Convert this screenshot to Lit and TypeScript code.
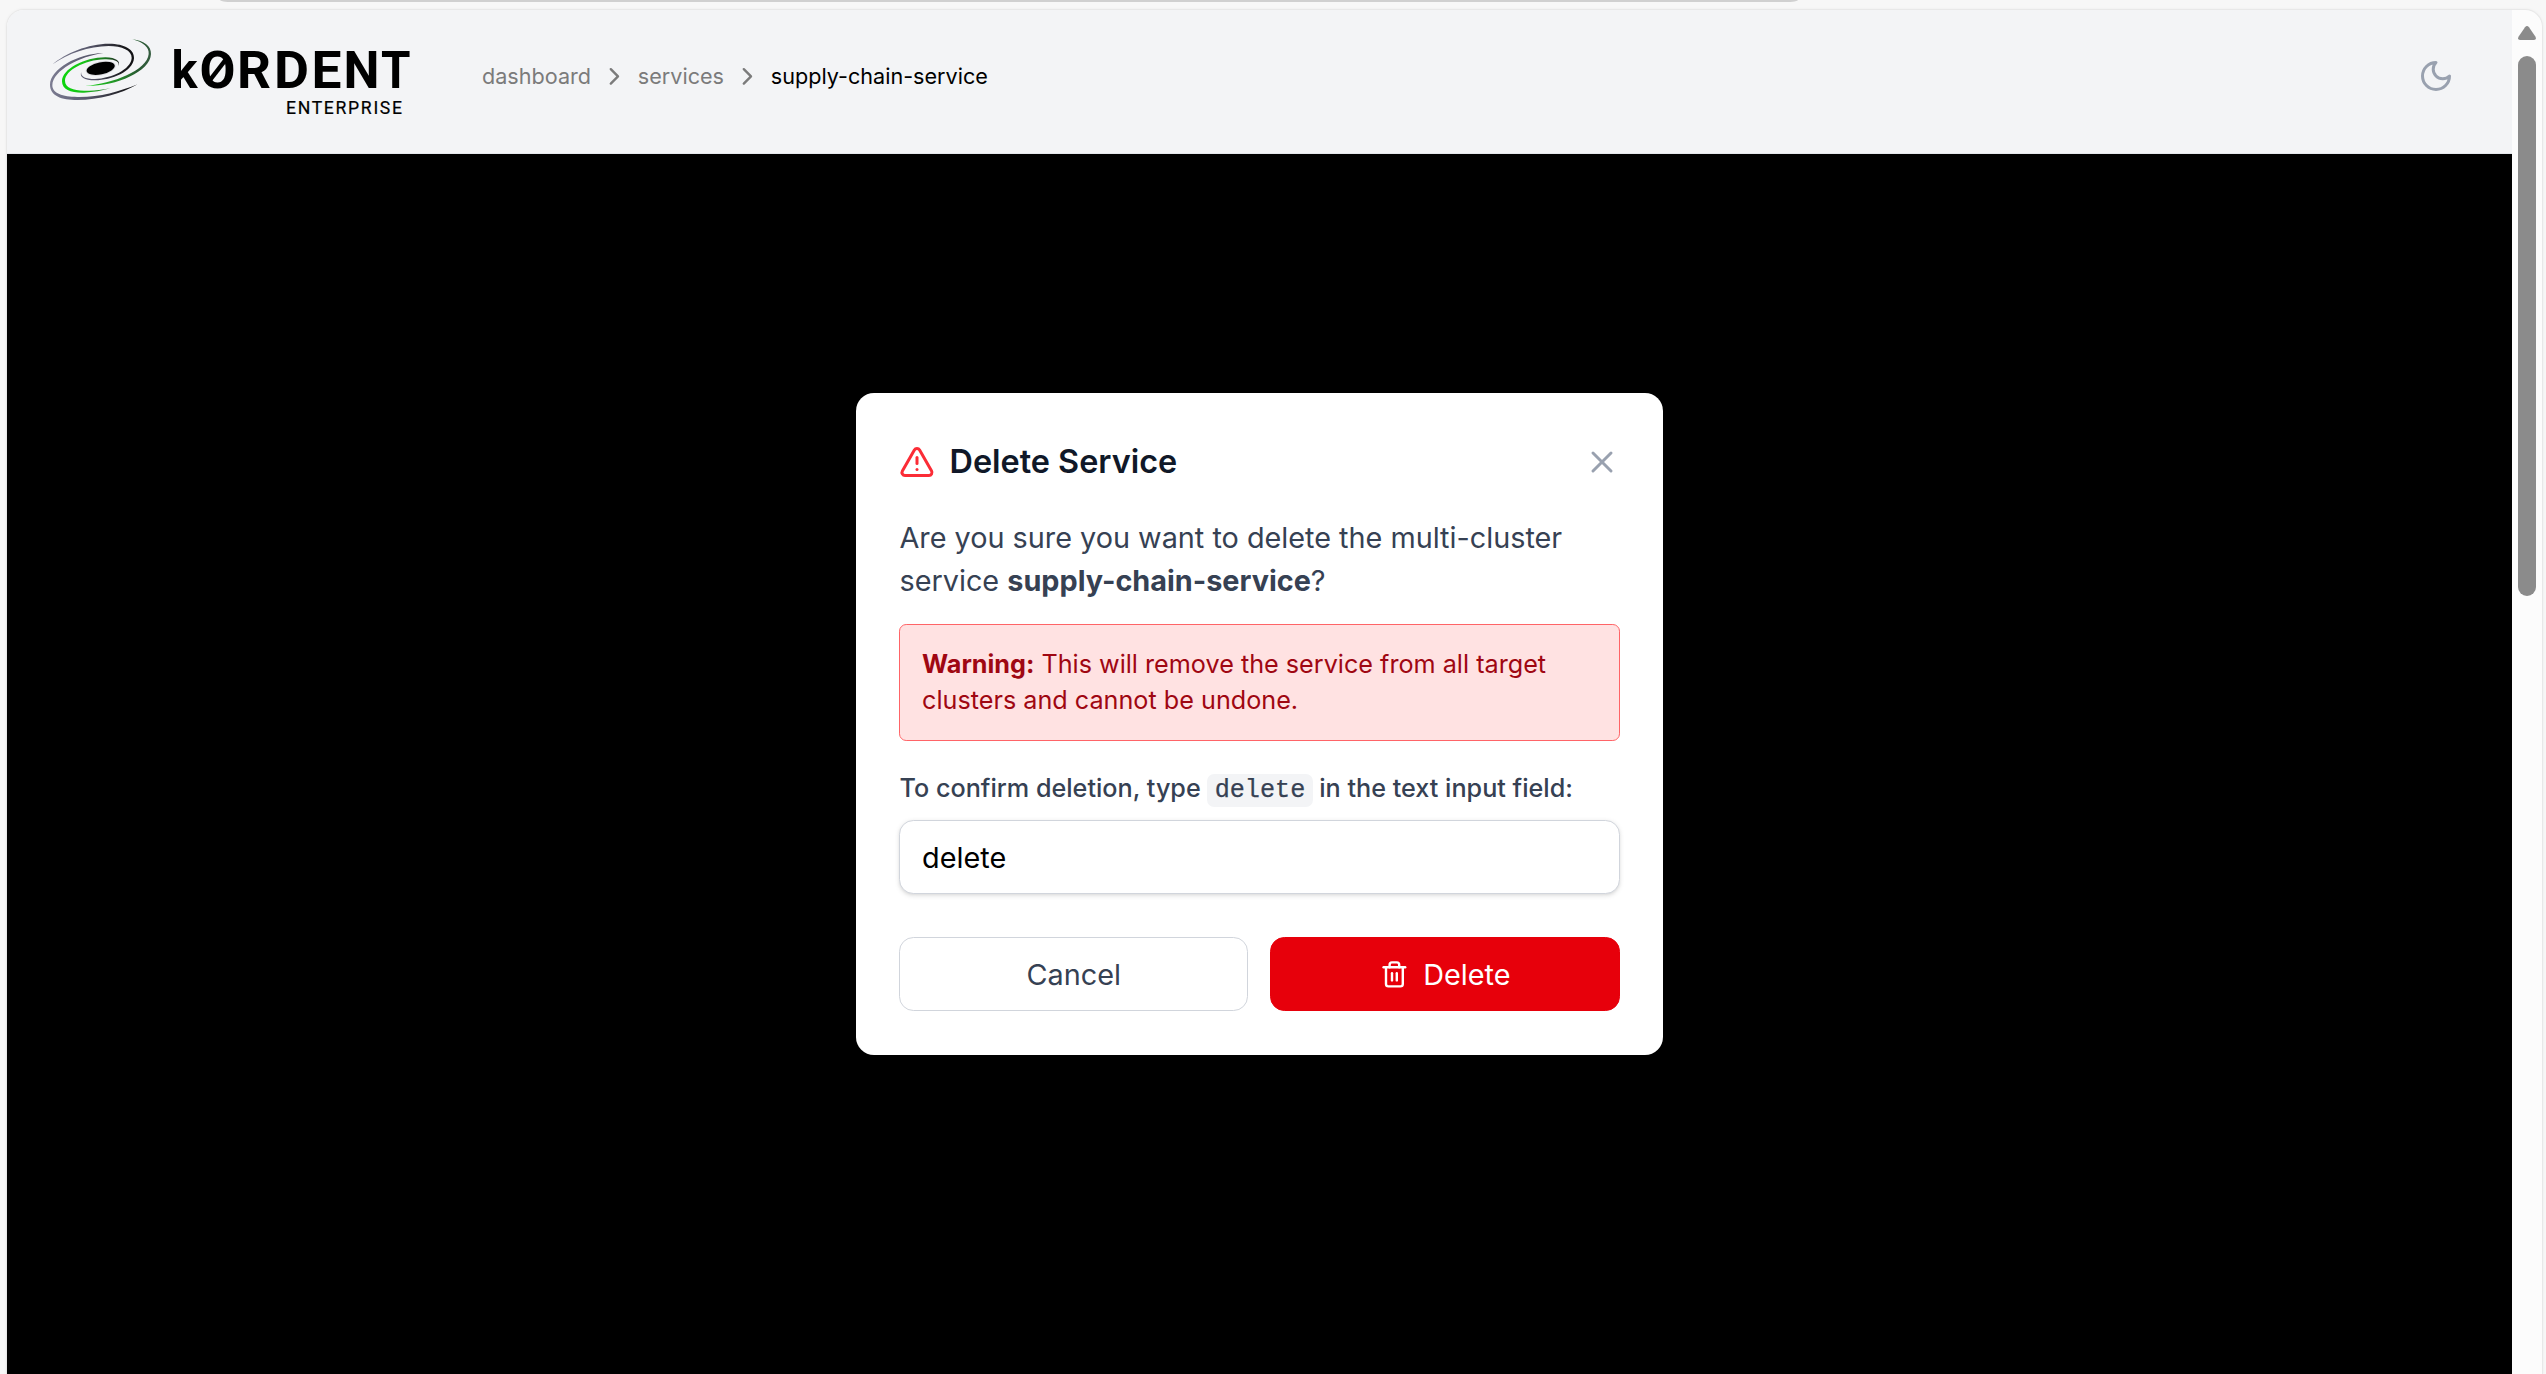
import { LitElement, html, css, svg } from "lit";
import { customElement, property } from "lit/decorators.js";

const ICONS = {
  alert: svg`<path d="m21.73 18-8-14a2 2 0 0 0-3.48 0l-8 14A2 2 0 0 0 4 21h16a2 2 0 0 0 1.73-3"/><path d="M12 9v4"/><path d="M12 17h.01"/>`,
  close: svg`<path d="M18 6 6 18"/><path d="m6 6 12 12"/>`,
  trash: svg`<path d="M3 6h18"/><path d="M19 6v14a2 2 0 0 1-2 2H7a2 2 0 0 1-2-2V6"/><path d="M8 6V4a2 2 0 0 1 2-2h4a2 2 0 0 1 2 2v2"/><path d="M10 11v6"/><path d="M14 11v6"/>`,
  moon: svg`<path d="M12 3a6 6 0 0 0 9 9 9 9 0 1 1-9-9Z"/>`,
  chevron: svg`<path d="m9 18 6-6-6-6"/>`,
};

@customElement("ui-icon")
class UiIcon extends LitElement {
  @property() name: keyof typeof ICONS = "close";

  static styles = css`
    :host { display: block; flex: none; width: 36px; height: 36px; }
    svg { display: block; width: 100%; height: 100%; }
  `;

  render() {
    return html`<svg viewBox="0 0 24 24" fill="none" stroke="currentColor" stroke-width="2" stroke-linecap="round" stroke-linejoin="round">${ICONS[this.name]}</svg>`;
  }
}

@customElement("brand-logo")
class BrandLogo extends LitElement {
  static styles = css`
    :host { display: block; width: 380px; height: 92px; }
    svg { display: block; }
    .word { font: 700 52px Roboto, "Liberation Sans", sans-serif; }
    .sub { font: 400 17.6px Roboto, "Liberation Sans", sans-serif; stroke: #000; stroke-width: .2px; }
  `;

  render() {
    return html`
      <svg width="380" height="92" viewBox="0 0 380 92">
        <defs>
          <linearGradient id="slate" x1="0" y1="0" x2="1" y2="0">
            <stop offset="0" stop-color="#7c7c92"/><stop offset=".45" stop-color="#56566a"/><stop offset=".85" stop-color="#1c1c20"/><stop offset="1" stop-color="#101012"/>
          </linearGradient>
          <linearGradient id="inner" x1="0" y1="0" x2="1" y2="0">
            <stop offset="0" stop-color="#0cd60c"/><stop offset=".4" stop-color="#18c018"/><stop offset=".8" stop-color="#1c6a20"/><stop offset="1" stop-color="#222"/>
          </linearGradient>
          <linearGradient id="outer" x1="0" y1="0" x2="1" y2="0">
            <stop offset="0" stop-color="#0fd80f"/><stop offset=".45" stop-color="#249428"/><stop offset=".8" stop-color="#285a32"/><stop offset="1" stop-color="#355c40"/>
          </linearGradient>
        </defs>
        <g transform="scale(.33333)">
          <path fill="url(#slate)" d="M38 103C75 70 145 41 207 41C255 41 284 60 282 85C279 125 215 151 165 151C133 151 117 141 124 126C121 139 135 147 165 147C213 145 273 119 275 84C276 61 246 48 206 48C147 49 83 70 38 103Z"/>
          <path fill="url(#slate)" d="M190 69C120 79 38 121 37 166C37 190 68 201 112 201C178 202 235 186 293 163C240 193 178 210 112 210C64 210 30 197 30 164C31 117 112 71 190 69Z"/>
          <path fill="url(#inner)" d="M235 109C243 94 229 83 196 82C132 82 66 118 66 154C66 180 94 189 132 188C160 187 187 182 211 175C180 181 157 184 132 182C100 181 75 173 75 152C76 122 132 90 194 88C228 87 240 96 235 109Z"/>
          <path fill="url(#outer)" d="M277 28C313 32 334 49 333 72C331 126 225 170 136 168C218 161 322 121 326 72C328 52 310 37 277 28Z"/>
          <ellipse cx="182" cy="115" rx="46" ry="21" fill="#dcdce0" transform="rotate(-12 182 115)"/>
          <ellipse cx="182" cy="115" rx="43" ry="18" transform="rotate(-12 182 115)"/>
        </g>
        <g class="word">
          <text x="131.5" y="58.4" textLength="26" lengthAdjust="spacingAndGlyphs">k</text>
          <text x="159.5" y="58.4" textLength="36" lengthAdjust="spacingAndGlyphs">O</text>
          <text x="197" y="58.4" textLength="34" lengthAdjust="spacingAndGlyphs">R</text>
          <text x="234" y="58.4" textLength="35" lengthAdjust="spacingAndGlyphs">D</text>
          <text x="271.5" y="58.4" textLength="30" lengthAdjust="spacingAndGlyphs">E</text>
          <text x="303.5" y="58.4" textLength="36" lengthAdjust="spacingAndGlyphs">N</text>
          <text x="341" y="58.4" textLength="29.5" lengthAdjust="spacingAndGlyphs">T</text>
        </g>
        <path d="M168.500 52 187 28" stroke="#000" stroke-width="4.500"/>
        <text class="sub" x="246" y="83.8" textLength="116" lengthAdjust="spacing">ENTERPRISE</text>
      </svg>`;
  }
}

@customElement("app-header")
class AppHeader extends LitElement {
  static styles = css`
    :host {
      display: flex; align-items: center; box-sizing: border-box; flex: none; height: 144px;
      padding: 0 58px 11px 33px; background: #f3f4f6; border-bottom: 1px solid #e5e7eb;
    }
    brand-logo { flex: none; }
    nav { display: flex; align-items: center; gap: 9px; margin-left: 62px; font-size: 21.6px; line-height: 30px; color: #7b7b7b; }
    nav ui-icon { width: 28.8px; height: 28.8px; }
    .here { color: #000; }
    .theme { margin-left: auto; color: #99a1af; }
  `;

  render() {
    return html`
      <brand-logo></brand-logo>
      <nav>
        <span>dashboard</span><ui-icon name="chevron"></ui-icon>
        <span>services</span><ui-icon name="chevron"></ui-icon>
        <span class="here">supply-chain-service</span>
      </nav>
      <ui-icon class="theme" name="moon"></ui-icon>`;
  }
}

@customElement("delete-dialog")
class DeleteDialog extends LitElement {
  static styles = css`
    :host {
      display: block; box-sizing: border-box; width: 806.4px; padding: 43.2px; border-radius: 18px;
      background: #fff; color: #364153; font-size: 28.8px; line-height: 43.2px;
    }
    .head { display: flex; align-items: center; height: 50.4px; margin-bottom: 28.8px; }
    .alert { color: #fb2c36; }
    .close { margin-left: auto; color: #99a1af; }
    h2 { margin: 0 0 0 14px; font-size: 32.4px; line-height: 50.4px; font-weight: 600; color: #101828; }
    p { margin: 0; }
    b { font-weight: 700; }
    .warning {
      margin-top: 21.6px; padding: 21.6px; border: 1px solid #ff6467; border-radius: 7.2px;
      background: #ffe2e2; color: #9f0712; font-size: 25.2px; line-height: 36px;
    }
    label { display: block; margin: 28.8px 0 14.4px; font-size: 25.2px; line-height: 36px; font-weight: 500; white-space: nowrap; }
    code {
      padding: 1.8px 7.2px; border-radius: 7.2px; background: #f3f4f6;
      font: 400 25.2px "Liberation Mono", monospace; -webkit-text-stroke: .25px currentColor;
    }
    input {
      display: block; box-sizing: border-box; width: 100%; height: 74px; padding: 0 21.6px; border: 1px solid #d1d5dc;
      border-radius: 14.4px; background: #fff; color: #000; font: inherit; outline: none;
      box-shadow: 0 1.8px 5.4px rgba(0,0,0,.1), 0 1.8px 3.6px -1.8px rgba(0,0,0,.1);
    }
    .actions { display: flex; gap: 21.8px; margin-top: 43.2px; }
    button {
      display: flex; align-items: center; justify-content: center; gap: 14.4px; flex: 1 1 0; box-sizing: border-box; height: 74px;
      padding: 0; border: 1px solid #d1d5dc; border-radius: 14.4px; background: #fff; color: inherit; font: inherit;
    }
    .danger { padding-left: 1px; border-color: #e7000b; background: #e7000b; color: #fff; }
    .danger ui-icon { width: 28.8px; height: 28.8px; }
  `;

  render() {
    return html`
      <div class="head">
        <ui-icon class="alert" name="alert"></ui-icon>
        <h2>Delete Service</h2>
        <ui-icon class="close" name="close"></ui-icon>
      </div>
      <p>Are you sure you want to delete the multi-cluster service <b>supply-chain-service</b>?</p>
      <div class="warning"><b>Warning:</b> This will remove the service from all target clusters and cannot be undone.</div>
      <label for="confirm">To confirm deletion, type <code>delete</code> in the text input field:</label>
      <input id="confirm" type="text" .value=${"delete"} />
      <div class="actions">
        <button>Cancel</button>
        <button class="danger"><ui-icon name="trash"></ui-icon>Delete</button>
      </div>`;
  }
}

@customElement("app-root")
class AppRoot extends LitElement {
  static styles = css`
    :host {
      display: flex; flex-direction: column; box-sizing: border-box; height: 100vh; overflow: hidden;
      background: #f7f7f7; font-family: Inter, "Liberation Sans", sans-serif;
    }
    .tab { flex: none; width: 1578px; height: 2px; margin-left: 220px; border-radius: 0 0 12px 12px / 0 0 2px 2px; background: #d0d0d0; }
    .frame {
      display: flex; flex: 1; min-height: 0; margin: 7px 3px 0 6px; border: 1px solid #e8e8e8; border-bottom: 0;
      border-radius: 18px 18px 0 0; overflow: hidden; background: #fcfcfc; box-shadow: 0 0 3px rgba(0,0,0,.05);
    }
    .page { display: flex; flex-direction: column; flex: 1; min-width: 0; }
    .overlay { display: flex; flex: 1; justify-content: center; align-items: flex-start; padding-top: 239.45px; background: #000; }
    .scroll { display: flex; flex-direction: column; align-items: center; flex: none; width: 30px; padding-top: 16px; }
    .scroll svg { display: block; width: 18px; height: 14px; }
    .thumb { width: 18px; height: 540px; margin-top: 16px; border-radius: 9px; background: #8b8b8b; }
  `;

  render() {
    return html`
      <div class="tab"></div>
      <div class="frame">
        <div class="page">
          <app-header></app-header>
          <div class="overlay"><delete-dialog></delete-dialog></div>
        </div>
        <div class="scroll">
          <svg viewBox="0 0 18 14"><path fill="#8b8b8b" d="M7 1.2Q9-1 11 1.2L17.5 10.8Q18.800 14 16 14H2Q-.8 14 .5 10.8Z"/></svg>
          <div class="thumb"></div>
        </div>
      </div>`;
  }
}
